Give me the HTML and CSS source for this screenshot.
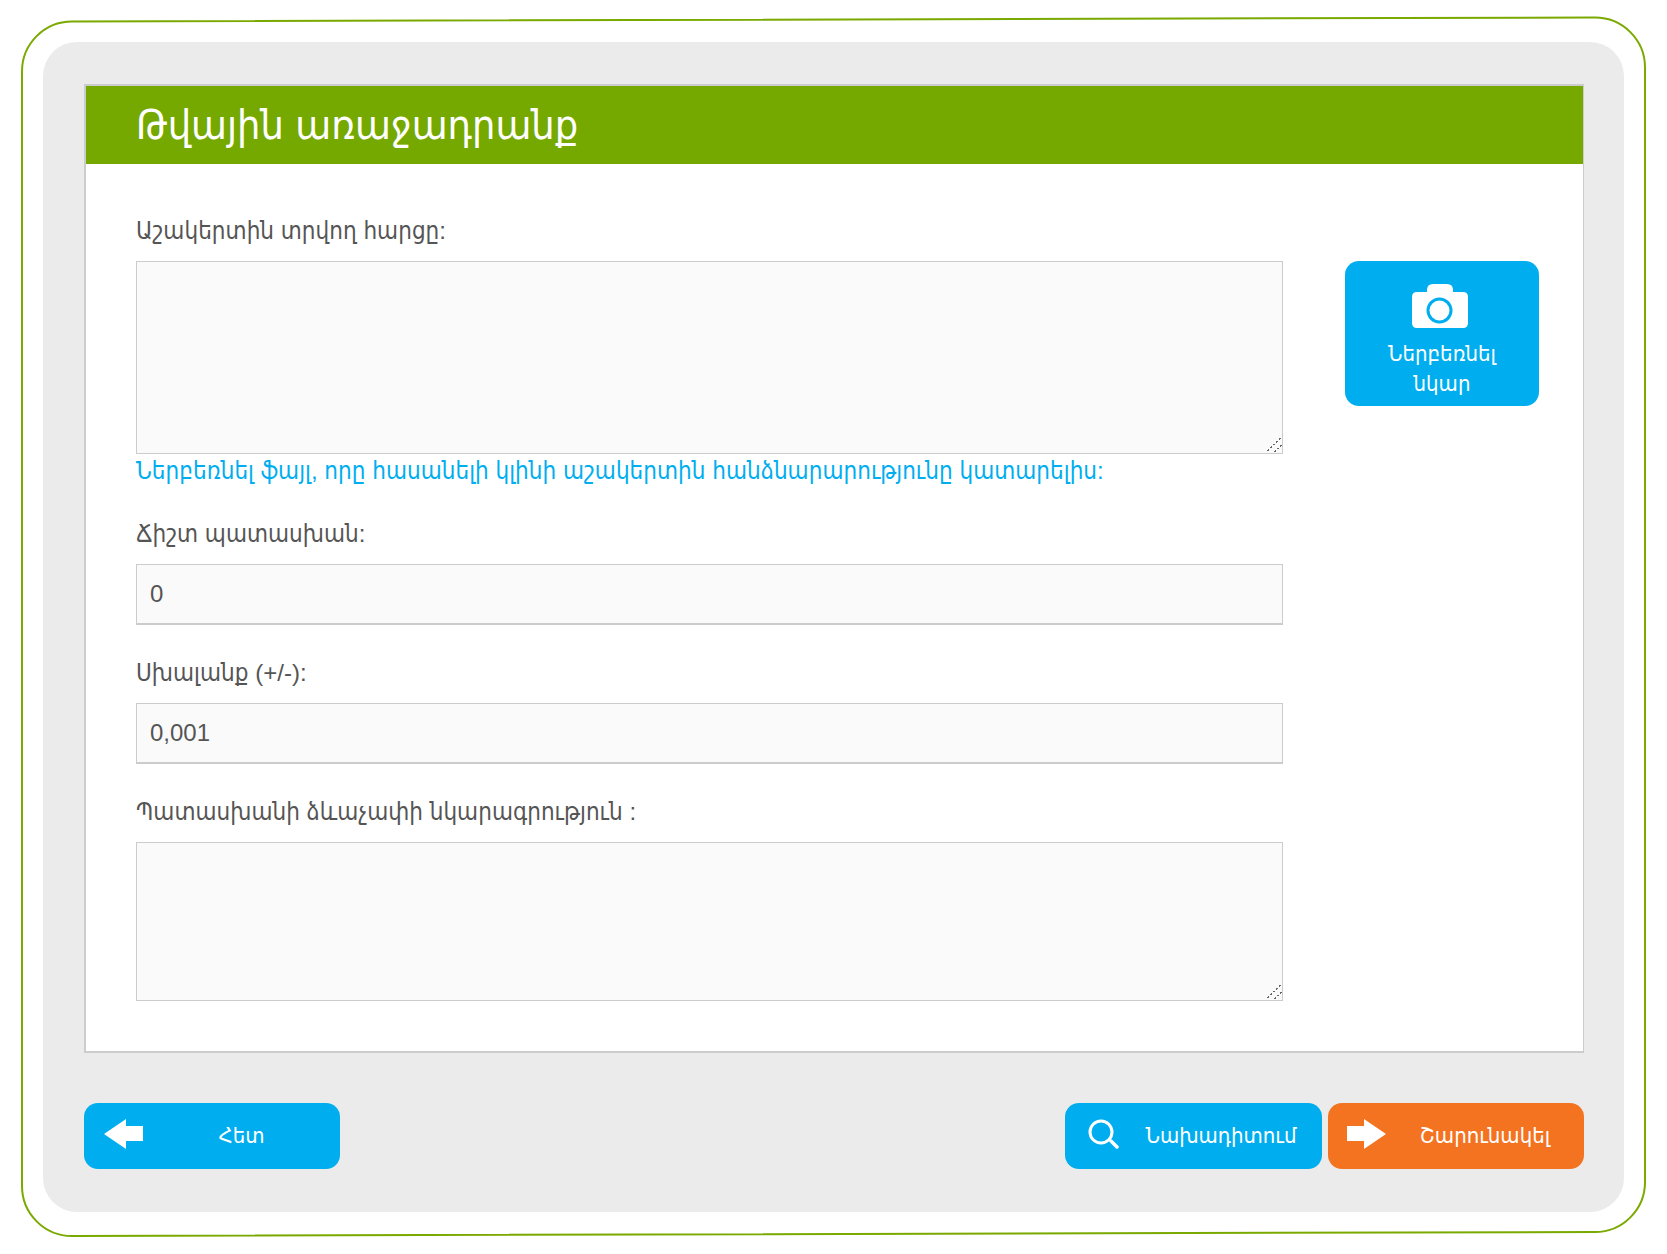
FILE: index.html
```html
<!DOCTYPE html>
<html lang="hy">
<head>
    <meta charset="UTF-8">
    <meta name="viewport" content="width=device-width, initial-scale=1.0">
    <title>Թվային առաջադրանք</title>
    <link rel="stylesheet" href="styles.css">
</head>
<body>
    <svg class="frame" width="1667" height="1254" viewBox="0 0 1667 1254" aria-hidden="true">
        <path d="M72 21.5 L1595 17.5 A50 50 0 0 1 1645 67.5 L1645 1182 A50 50 0 0 1 1595 1232 L72 1236 A50 50 0 0 1 22 1186 L22 71.5 A50 50 0 0 1 72 21.5 Z" fill="none" stroke="#7aa900" stroke-width="2"/>
    </svg>
    <div class="shell">
        <section class="panel">
            <h1 class="panel-title">Թվային առաջադրանք</h1>
            <div class="panel-body">
                <form class="task-form">
                    <label class="field-label" for="question">Աշակերտին տրվող հարցը:</label>
                    <textarea class="field-area question-area" id="question"></textarea>
                    <p class="field-hint">Ներբեռնել ֆայլ, որը հասանելի կլինի աշակերտին հանձնարարությունը կատարելիս:</p>
                    <label class="field-label" for="answer">Ճիշտ պատասխան:</label>
                    <input class="field-input" id="answer" type="text" value="0">
                    <label class="field-label" for="tolerance">Սխալանք (+/-):</label>
                    <input class="field-input" id="tolerance" type="text" value="0,001">
                    <label class="field-label" for="format">Պատասխանի ձևաչափի նկարագրություն :</label>
                    <textarea class="field-area format-area" id="format"></textarea>
                </form>
                <button class="upload-button" type="button">
                    <svg class="upload-icon" width="56" height="44" viewBox="0 0 56 44" aria-hidden="true">
                        <path d="M5 8 H15 V6 Q15 0 21 0 H35 Q41 0 41 6 V8 H51 Q56 8 56 13 V39 Q56 44 51 44 H5 Q0 44 0 39 V13 Q0 8 5 8 Z" fill="#fff"/>
                        <circle cx="27.5" cy="26.5" r="11.5" fill="#fff" stroke="#00aeef" stroke-width="3"/>
                    </svg>
                    <span>Ներբեռնել<br>նկար</span>
                </button>
            </div>
        </section>
        <div class="actions">
            <button class="action-button back-button" type="button">
                <svg width="39" height="30" viewBox="0 0 39 30" aria-hidden="true"><path d="M0 15 L22 0 V7 H39 V22 H22 V30 Z" fill="#fff"/></svg>
                <span>Հետ</span>
            </button>
            <div class="actions-right">
                <button class="action-button preview-button" type="button">
                    <svg width="32" height="30" viewBox="0 0 32 30" aria-hidden="true">
                        <circle cx="13" cy="13" r="11" fill="none" stroke="#fff" stroke-width="3"/>
                        <path d="M23 22 L29 28" stroke="#fff" stroke-width="3.5" stroke-linecap="round"/>
                    </svg>
                    <span>Նախադիտում</span>
                </button>
                <button class="action-button next-button" type="button">
                    <svg width="39" height="30" viewBox="0 0 39 30" aria-hidden="true"><path d="M39 15 L17 0 V7 H0 V22 H17 V30 Z" fill="#fff"/></svg>
                    <span>Շարունակել</span>
                </button>
            </div>
        </div>
    </div>
</body>
</html>
```

FILE: styles.css
```css
body {
    margin: 0;
    background: #fff;
    font-family: "Liberation Sans", "DejaVu Sans Condensed", sans-serif;
    color: #555;
}

.frame {
    position: absolute;
    top: 0;
    left: 0;
}

.shell {
    position: relative;
    width: 1581px;
    margin: 42px 0 0 43px;
    padding: 42px 40px 43px 41px;
    box-sizing: border-box;
    background: #ebebeb;
    border-radius: 34px;
}

.panel {
    background: #fff;
    border: solid #ccc;
    border-width: 2px 1px 2px 2px;
}

.panel-title {
    margin: 0;
    height: 78px;
    padding-left: 50px;
    background: #76a900;
    color: #fff;
    font-size: 41px;
    font-weight: normal;
    line-height: 78px;
}

.panel-body {
    display: flex;
    align-items: flex-start;
    padding: 52px 44px 50px 50px;
}

.task-form {
    display: flex;
    flex-direction: column;
    width: 1147px;
}

.field-label {
    display: block;
    margin: 33px 0 15px;
    font-size: 24px;
    letter-spacing: 0.03px;
    line-height: 30px;
}

.field-label:first-child {
    margin-top: 0;
}

.field-hint {
    margin: 2px 0 0;
    color: #00aeef;
    font-size: 24px;
    letter-spacing: 0.03px;
    line-height: 30px;
}

.field-area,
.field-input {
    display: block;
    box-sizing: border-box;
    width: 100%;
    margin: 0;
    padding: 0 13px;
    background: #fafafa;
    border: 1px solid #ccc;
    border-radius: 0;
    color: #555;
    font-family: inherit;
    font-size: 24px;
}

/* dashed diagonals like the old browser grip */
.field-area::-webkit-resizer {
    background:
        repeating-linear-gradient(45deg, #fafafa 0, #fafafa 2px, transparent 2px, transparent 4px),
        linear-gradient(135deg, transparent 41%, #666 41%, #666 47%, transparent 47%, transparent 68%, #666 68%, #666 74%, transparent 74%);
}

.field-input {
    height: 61px;
    border-bottom-width: 2px;
}

.question-area {
    height: 193px;
}

.format-area {
    height: 159px;
}

.upload-button {
    display: flex;
    flex-direction: column;
    align-items: center;
    width: 194px;
    height: 145px;
    margin: 45px 0 0 62px;
    padding: 23px 0 0;
    background: #00aeef;
    border: none;
    border-radius: 14px;
    color: #fff;
    font-family: inherit;
    font-size: 22px;
    line-height: 29.5px;
}

.upload-icon {
    margin-right: 4px;
}

.upload-button span {
    margin-top: 11px;
}

.actions {
    display: flex;
    justify-content: space-between;
    margin-top: 50px;
}

.actions-right {
    display: flex;
    gap: 6px;
}

.action-button {
    display: flex;
    align-items: center;
    width: 256px;
    height: 66px;
    padding: 0 0 4px 20px;
    background: #00aeef;
    border: none;
    border-radius: 14px;
    color: #fff;
    font-family: inherit;
    font-size: 22px;
}

.action-button span {
    flex: 1;
    margin-top: 4px;
    text-align: center;
}

.preview-button {
    width: 257px;
    padding-left: 23px;
}

.next-button {
    padding-left: 19px;
    background: #f47321;
}
```
